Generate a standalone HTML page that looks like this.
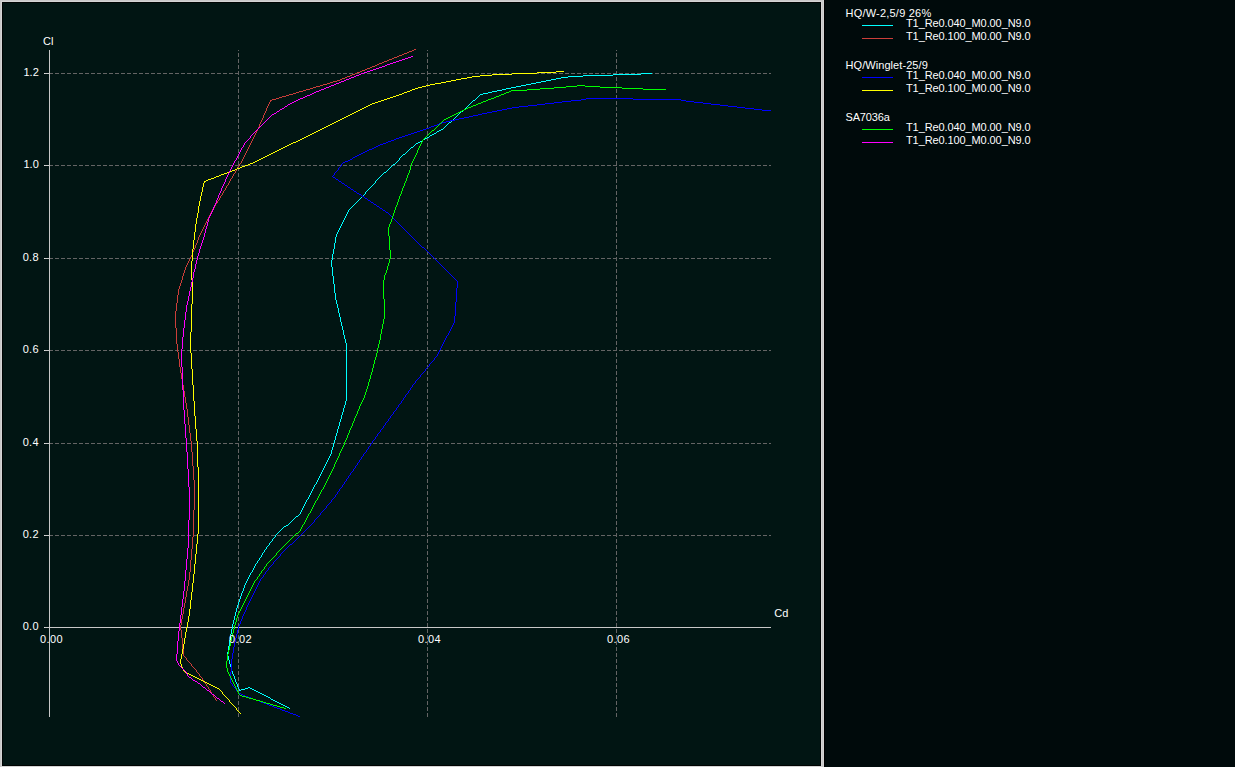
<!DOCTYPE html>
<html><head><meta charset="utf-8"><title>Polars</title>
<style>
html,body{margin:0;padding:0;background:#000a0b;overflow:hidden}
body{width:1235px;height:767px;position:relative;font-family:"Liberation Sans", sans-serif;font-size:11px;color:#fff}
#plot{position:absolute;left:0;top:0;width:823px;height:768px;background:#011513;box-sizing:border-box}
.b{position:absolute}
.t{position:absolute;white-space:nowrap;line-height:14px;height:14px;font-size:11px}
</style></head><body>
<div id="plot"></div>
<div class="b" style="left:0;top:0;width:823px;height:1px;background:#c8c8c8"></div>
<div class="b" style="left:0;top:0;width:1px;height:767px;background:#c8c8c8"></div>
<div class="b" style="left:1px;top:1px;width:821px;height:1px;background:#d4d4d4"></div>
<div class="b" style="left:1px;top:1px;width:1px;height:766px;background:#d4d4d4"></div>
<div class="b" style="left:2px;top:2px;width:819px;height:1px;background:#000403"></div>
<div class="b" style="left:2px;top:2px;width:1px;height:764px;background:#000403"></div>
<div class="b" style="left:2px;top:765px;width:819px;height:1px;background:#000403"></div>
<div class="b" style="left:820px;top:2px;width:1px;height:764px;background:#000403"></div>
<div class="b" style="left:1px;top:766px;width:821px;height:1px;background:#d4d4d4"></div>
<div class="b" style="left:821px;top:1px;width:1px;height:766px;background:#d4d4d4"></div>
<div class="b" style="left:822px;top:0;width:1px;height:767px;background:#c8c8c8"></div>
<div class="b" style="left:823px;top:0;width:1px;height:767px;background:#d4d4d4"></div>
<div class="b" style="left:824px;top:0;width:1px;height:767px;background:#000"></div>
<svg width="1235" height="767" viewBox="0 0 1235 767" style="position:absolute;left:0;top:0" shape-rendering="crispEdges">
<line x1="238.5" y1="717" x2="238.5" y2="50" stroke="#646464" stroke-width="1" stroke-dasharray="4 2"/>
<line x1="427.5" y1="717" x2="427.5" y2="50" stroke="#646464" stroke-width="1" stroke-dasharray="4 2"/>
<line x1="616.5" y1="717" x2="616.5" y2="50" stroke="#646464" stroke-width="1" stroke-dasharray="4 2"/>
<line x1="49" y1="73.5" x2="771" y2="73.5" stroke="#646464" stroke-width="1" stroke-dasharray="4 2"/>
<line x1="49" y1="165.5" x2="771" y2="165.5" stroke="#646464" stroke-width="1" stroke-dasharray="4 2"/>
<line x1="49" y1="258.5" x2="771" y2="258.5" stroke="#646464" stroke-width="1" stroke-dasharray="4 2"/>
<line x1="49" y1="350.5" x2="771" y2="350.5" stroke="#646464" stroke-width="1" stroke-dasharray="4 2"/>
<line x1="49" y1="443.5" x2="771" y2="443.5" stroke="#646464" stroke-width="1" stroke-dasharray="4 2"/>
<line x1="49" y1="535.5" x2="771" y2="535.5" stroke="#646464" stroke-width="1" stroke-dasharray="4 2"/>
<line x1="49.5" y1="50" x2="49.5" y2="717" stroke="#c8c8c8" stroke-width="1"/>
<line x1="49" y1="627.5" x2="771" y2="627.5" stroke="#c8c8c8" stroke-width="1"/>
<line x1="44" y1="73.5" x2="49" y2="73.5" stroke="#c8c8c8" stroke-width="1"/>
<line x1="44" y1="73.5" x2="45" y2="73.5" stroke="#e2e2e2" stroke-width="1"/>
<line x1="44" y1="165.5" x2="49" y2="165.5" stroke="#c8c8c8" stroke-width="1"/>
<line x1="44" y1="165.5" x2="45" y2="165.5" stroke="#e2e2e2" stroke-width="1"/>
<line x1="44" y1="258.5" x2="49" y2="258.5" stroke="#c8c8c8" stroke-width="1"/>
<line x1="44" y1="258.5" x2="45" y2="258.5" stroke="#e2e2e2" stroke-width="1"/>
<line x1="44" y1="350.5" x2="49" y2="350.5" stroke="#c8c8c8" stroke-width="1"/>
<line x1="44" y1="350.5" x2="45" y2="350.5" stroke="#e2e2e2" stroke-width="1"/>
<line x1="44" y1="443.5" x2="49" y2="443.5" stroke="#c8c8c8" stroke-width="1"/>
<line x1="44" y1="443.5" x2="45" y2="443.5" stroke="#e2e2e2" stroke-width="1"/>
<line x1="44" y1="535.5" x2="49" y2="535.5" stroke="#c8c8c8" stroke-width="1"/>
<line x1="44" y1="535.5" x2="45" y2="535.5" stroke="#e2e2e2" stroke-width="1"/>
<line x1="44" y1="627.5" x2="49" y2="627.5" stroke="#c8c8c8" stroke-width="1"/>
<line x1="44" y1="627.5" x2="45" y2="627.5" stroke="#e2e2e2" stroke-width="1"/>
<path fill="none" stroke="#00ffff" stroke-width="1" d="M641 73.5h11M613 74.5h28M583 75.5h30M568 76.5h15M561 77.5h7M556 78.5h5M551 79.5h5M546 80.5h5M541 81.5h5M536 82.5h5M531 83.5h5M526 84.5h5M521 85.5h5M516 86.5h5M511 87.5h5M506 88.5h5M502 89.5h4M497 90.5h5M492 91.5h5M488 92.5h4M483 93.5h5M480 94.5h3M473 100.5h2M461 111.5h2M449 122.5h2M441 129.5h2M439 130.5h2M437 131.5h2M434 133.5h2M432 134.5h2M430 135.5h2M427 137.5h2M425 138.5h2M423 139.5h2M420 141.5h2M418 142.5h2M416 143.5h2M411 147.5h2M403 154.5h2M393 164.5h2M384 172.5h2M296 516.5h2M286 525.5h2M284 526.5h2M248 687.5h2M245 688.5h3M250 688.5h2M241 689.5h4M252 689.5h2M239 690.5h2M254 690.5h2M256 691.5h2M258 692.5h2M260 693.5h2M262 694.5h2M264 695.5h2M266 696.5h2M268 697.5h2M271 699.5h2M273 700.5h2M275 701.5h2M277 702.5h2M279 703.5h2M281 704.5h2M283 705.5h2M285 706.5h2M287 707.5h2M227.5 652v4M228.5 646v6M228.5 656v4M229.5 640v6M229.5 660v4M230.5 634v6M230.5 664v3M231.5 629v5M231.5 667v4M232.5 624v5M232.5 671v3M233.5 620v4M233.5 674v2M234.5 616v4M234.5 676v3M235.5 612v4M235.5 679v3M236.5 608v4M236.5 682v2M237.5 605v3M237.5 684v3M238.5 602v3M238.5 687v2M239.5 599v3M239.5 689v1M240.5 596v3M241.5 593v3M242.5 591v2M243.5 588v3M244.5 585v3M245.5 583v2M246.5 581v2M247.5 579v2M248.5 577v2M249.5 575v2M250.5 573v2M251.5 572v1M252.5 570v2M253.5 568v2M254.5 566v2M255.5 564v2M256.5 563v1M257.5 561v2M258.5 560v1M259.5 558v2M260.5 557v1M261.5 555v2M262.5 553v2M263.5 552v1M264.5 550v2M265.5 549v1M266.5 547v2M267.5 546v1M268.5 545v1M269.5 543v2M270.5 542v1M270.5 698v1M271.5 541v1M272.5 539v2M273.5 538v1M274.5 537v1M275.5 535v2M276.5 534v1M277.5 533v1M278.5 532v1M279.5 531v1M280.5 530v1M281.5 529v1M282.5 528v1M283.5 527v1M288.5 524v1M289.5 523v1M289.5 708v1M290.5 522v1M291.5 521v1M292.5 520v1M293.5 519v1M294.5 518v1M295.5 517v1M298.5 515v1M299.5 514v1M300.5 512v2M301.5 510v2M302.5 508v2M303.5 506v2M304.5 504v2M305.5 502v2M306.5 500v2M307.5 499v1M308.5 497v2M309.5 495v2M310.5 493v2M311.5 491v2M312.5 489v2M313.5 487v2M314.5 485v2M315.5 484v1M316.5 482v2M317.5 480v2M318.5 478v2M319.5 476v2M320.5 474v2M321.5 472v2M322.5 470v2M323.5 468v2M324.5 466v2M325.5 464v2M326.5 462v2M327.5 460v2M328.5 458v2M329.5 456v2M330.5 454v2M331.5 260v7M331.5 450v4M332.5 254v6M332.5 267v9M332.5 447v3M333.5 249v5M333.5 276v8M333.5 443v4M334.5 243v6M334.5 284v9M334.5 440v3M335.5 237v6M335.5 293v7M335.5 436v4M336.5 234v3M336.5 300v4M336.5 433v3M337.5 232v2M337.5 304v4M337.5 429v4M338.5 230v2M338.5 308v5M338.5 426v3M339.5 228v2M339.5 313v4M339.5 422v4M340.5 226v2M340.5 317v5M340.5 419v3M341.5 224v2M341.5 322v4M341.5 415v4M342.5 222v2M342.5 326v4M342.5 412v3M343.5 220v2M343.5 330v5M343.5 408v4M344.5 218v2M344.5 335v4M344.5 405v3M345.5 216v2M345.5 339v4M345.5 401v4M346.5 214v2M346.5 343v58M347.5 212v2M348.5 210v2M349.5 209v1M350.5 208v1M351.5 207v1M352.5 206v1M353.5 205v1M354.5 204v1M355.5 203v1M356.5 202v1M357.5 201v1M358.5 200v1M359.5 199v1M360.5 198v1M361.5 197v1M362.5 196v1M363.5 195v1M364.5 194v1M365.5 192v2M366.5 191v1M367.5 190v1M368.5 189v1M369.5 188v1M370.5 187v1M371.5 186v1M372.5 185v1M373.5 184v1M374.5 183v1M375.5 181v2M376.5 180v1M377.5 179v1M378.5 178v1M379.5 177v1M380.5 176v1M381.5 175v1M382.5 174v1M383.5 173v1M386.5 171v1M387.5 170v1M388.5 169v1M389.5 168v1M390.5 167v1M391.5 166v1M392.5 165v1M395.5 163v1M396.5 162v1M397.5 161v1M398.5 160v1M399.5 158v2M400.5 157v1M401.5 156v1M402.5 155v1M405.5 153v1M406.5 152v1M407.5 151v1M408.5 150v1M409.5 149v1M410.5 148v1M413.5 146v1M414.5 145v1M415.5 144v1M422.5 140v1M429.5 136v1M436.5 132v1M443.5 128v1M444.5 127v1M445.5 126v1M446.5 125v1M447.5 124v1M448.5 123v1M451.5 121v1M452.5 120v1M453.5 119v1M454.5 118v1M455.5 117v1M456.5 116v1M457.5 115v1M458.5 114v1M459.5 113v1M460.5 112v1M463.5 110v1M464.5 109v1M465.5 108v1M466.5 107v1M467.5 106v1M468.5 105v1M469.5 104v1M470.5 103v1M471.5 102v1M472.5 101v1M475.5 99v1M476.5 98v1M477.5 97v1M478.5 96v1M479.5 95v1"/>
<path fill="none" stroke="#cb3e3a" stroke-width="1" d="M414 49.5h2M412 50.5h2M409 51.5h3M407 52.5h2M404 53.5h3M402 54.5h2M399 55.5h3M397 56.5h2M394 57.5h3M392 58.5h2M389 59.5h3M387 60.5h2M384 61.5h3M382 62.5h2M379 63.5h3M377 64.5h2M375 65.5h2M372 66.5h3M370 67.5h2M367 68.5h3M365 69.5h2M362 70.5h3M360 71.5h2M357 72.5h3M355 73.5h2M352 74.5h3M350 75.5h2M347 76.5h3M345 77.5h2M342 78.5h3M340 79.5h2M337 80.5h3M333 81.5h4M330 82.5h3M327 83.5h3M323 84.5h4M320 85.5h3M316 86.5h4M313 87.5h3M310 88.5h3M306 89.5h4M303 90.5h3M299 91.5h4M296 92.5h3M293 93.5h3M289 94.5h4M286 95.5h3M282 96.5h4M279 97.5h3M276 98.5h3M272 99.5h4M270 100.5h2M175.5 311v17M176.5 303v8M176.5 328v16M177.5 295v8M177.5 344v8M178.5 289v6M178.5 352v7M179.5 286v3M179.5 359v8M180.5 283v3M180.5 367v6M180.5 625v5M181.5 280v3M181.5 373v6M181.5 619v6M181.5 630v8M182.5 276v4M182.5 379v6M182.5 614v5M182.5 638v11M183.5 273v3M183.5 385v6M183.5 608v6M183.5 649v7M184.5 270v3M184.5 391v6M184.5 603v5M184.5 656v1M185.5 267v3M185.5 397v6M185.5 597v6M185.5 657v1M186.5 265v2M186.5 403v6M186.5 591v6M186.5 658v2M187.5 263v2M187.5 409v8M187.5 586v5M187.5 660v1M188.5 261v2M188.5 417v8M188.5 580v6M188.5 661v1M189.5 259v2M189.5 425v8M189.5 572v8M189.5 662v1M190.5 257v2M190.5 433v8M190.5 560v12M190.5 663v1M191.5 255v2M191.5 441v11M191.5 549v11M191.5 664v2M192.5 252v3M192.5 452v14M192.5 537v12M192.5 666v1M193.5 250v2M193.5 466v14M193.5 510v27M193.5 667v1M194.5 248v2M194.5 480v30M194.5 668v1M195.5 245v3M195.5 669v1M196.5 243v2M196.5 670v2M197.5 240v3M197.5 672v1M198.5 237v3M198.5 673v1M199.5 235v2M199.5 674v2M200.5 233v2M200.5 676v1M201.5 231v2M201.5 677v1M202.5 229v2M202.5 678v2M203.5 227v2M203.5 680v1M204.5 225v2M204.5 681v2M205.5 223v2M205.5 683v1M206.5 221v2M206.5 684v2M207.5 219v2M207.5 686v1M208.5 217v2M208.5 687v2M209.5 215v2M209.5 689v1M210.5 213v2M210.5 690v2M211.5 211v2M211.5 692v2M212.5 209v2M212.5 694v1M213.5 208v1M213.5 695v2M214.5 206v2M214.5 697v1M215.5 204v2M215.5 698v2M216.5 203v1M216.5 700v1M217.5 201v2M218.5 200v1M219.5 198v2M220.5 196v2M221.5 195v1M222.5 193v2M223.5 191v2M224.5 190v1M225.5 188v2M226.5 186v2M227.5 185v1M228.5 183v2M229.5 181v2M230.5 179v2M231.5 178v1M232.5 176v2M233.5 174v2M234.5 173v1M235.5 171v2M236.5 169v2M237.5 167v2M238.5 166v1M239.5 164v2M240.5 163v1M241.5 161v2M242.5 159v2M243.5 157v2M244.5 155v2M245.5 153v2M246.5 151v2M247.5 149v2M248.5 147v2M249.5 145v2M250.5 143v2M251.5 141v2M252.5 139v2M253.5 137v2M254.5 135v2M255.5 133v2M256.5 131v2M257.5 129v2M258.5 127v2M259.5 124v3M260.5 122v2M261.5 120v2M262.5 118v2M263.5 115v3M264.5 113v2M265.5 111v2M266.5 108v3M267.5 106v2M268.5 104v2M269.5 102v2M270.5 101v1"/>
<path fill="none" stroke="#0000ff" stroke-width="1" d="M586 98.5h47M581 99.5h5M633 99.5h48M571 100.5h10M681 100.5h5M562 101.5h9M686 101.5h8M554 102.5h8M694 102.5h9M545 103.5h9M703 103.5h8M537 104.5h8M711 104.5h9M528 105.5h9M720 105.5h8M519 106.5h9M728 106.5h9M512 107.5h7M737 107.5h8M507 108.5h5M745 108.5h9M502 109.5h5M754 109.5h8M497 110.5h5M762 110.5h9M492 111.5h5M487 112.5h5M482 113.5h5M478 114.5h4M473 115.5h5M469 116.5h4M464 117.5h5M459 118.5h5M455 119.5h4M450 120.5h5M446 121.5h4M442 122.5h4M439 123.5h3M437 124.5h2M434 125.5h3M431 126.5h3M429 127.5h2M426 128.5h3M423 129.5h3M420 130.5h3M417 131.5h3M414 132.5h3M411 133.5h3M408 134.5h3M405 135.5h3M402 136.5h3M399 137.5h3M396 138.5h3M394 139.5h2M391 140.5h3M388 141.5h3M386 142.5h2M383 143.5h3M380 144.5h3M378 145.5h2M376 146.5h2M374 147.5h2M372 148.5h2M369 149.5h3M367 150.5h2M365 151.5h2M363 152.5h2M361 153.5h2M359 154.5h2M357 155.5h2M355 156.5h2M353 157.5h2M350 159.5h2M348 160.5h2M345 161.5h3M343 162.5h2M333 177.5h2M336 179.5h2M339 181.5h2M342 183.5h2M345 185.5h2M348 187.5h2M351 189.5h2M354 191.5h2M357 193.5h2M359 194.5h2M362 196.5h2M365 198.5h2M368 200.5h2M371 202.5h2M374 204.5h2M377 206.5h2M380 208.5h2M383 210.5h2M386 212.5h2M422 247.5h2M290 544.5h2M239 693.5h2M241 694.5h2M243 695.5h2M245 696.5h3M248 697.5h3M251 698.5h2M253 699.5h3M256 700.5h3M259 701.5h2M261 702.5h3M264 703.5h3M267 704.5h2M269 705.5h3M272 706.5h2M274 707.5h3M277 708.5h3M280 709.5h2M282 710.5h3M285 711.5h3M288 712.5h2M290 713.5h3M293 714.5h3M296 715.5h2M298 716.5h2M230.5 672v11M231.5 659v13M231.5 683v1M232.5 653v6M232.5 684v2M233.5 647v6M233.5 686v1M234.5 642v5M234.5 687v1M235.5 638v4M235.5 688v1M236.5 634v4M236.5 689v2M237.5 630v4M237.5 691v1M238.5 626v4M238.5 692v1M239.5 624v2M240.5 621v3M241.5 619v2M242.5 616v3M243.5 614v2M244.5 612v2M245.5 610v2M246.5 607v3M247.5 605v2M248.5 603v2M249.5 601v2M250.5 599v2M251.5 597v2M252.5 595v2M253.5 593v2M254.5 591v2M255.5 589v2M256.5 587v2M257.5 585v2M258.5 583v2M259.5 581v2M260.5 579v2M261.5 578v1M262.5 577v1M263.5 575v2M264.5 574v1M265.5 572v2M266.5 571v1M267.5 570v1M268.5 568v2M269.5 567v1M270.5 566v1M271.5 565v1M272.5 564v1M273.5 562v2M274.5 561v1M275.5 560v1M276.5 559v1M277.5 558v1M278.5 557v1M279.5 556v1M280.5 554v2M281.5 553v1M282.5 552v1M283.5 551v1M284.5 550v1M285.5 549v1M286.5 548v1M287.5 547v1M288.5 546v1M289.5 545v1M292.5 543v1M293.5 542v1M294.5 541v1M295.5 540v1M296.5 539v1M297.5 538v1M298.5 537v1M299.5 536v1M300.5 535v1M301.5 534v1M302.5 533v1M303.5 532v1M304.5 531v1M305.5 530v1M306.5 529v1M307.5 528v1M308.5 527v1M309.5 526v1M310.5 525v1M311.5 524v1M312.5 523v1M313.5 522v1M314.5 520v2M315.5 519v1M316.5 518v1M317.5 517v1M318.5 516v1M319.5 515v1M320.5 513v2M321.5 512v1M322.5 511v1M323.5 510v1M324.5 509v1M325.5 508v1M326.5 506v2M327.5 505v1M328.5 504v1M329.5 503v1M330.5 502v1M331.5 500v2M332.5 176v1M332.5 499v1M333.5 175v1M333.5 498v1M334.5 173v2M334.5 497v1M335.5 172v1M335.5 178v1M335.5 495v2M336.5 171v1M336.5 494v1M337.5 170v1M337.5 492v2M338.5 168v2M338.5 180v1M338.5 491v1M339.5 167v1M339.5 489v2M340.5 166v1M340.5 488v1M341.5 164v2M341.5 182v1M341.5 487v1M342.5 163v1M342.5 485v2M343.5 484v1M344.5 184v1M344.5 482v2M345.5 481v1M346.5 479v2M347.5 186v1M347.5 478v1M348.5 476v2M349.5 475v1M350.5 188v1M350.5 473v2M351.5 472v1M352.5 158v1M352.5 471v1M353.5 190v1M353.5 469v2M354.5 468v1M355.5 466v2M356.5 192v1M356.5 465v1M357.5 463v2M358.5 462v1M359.5 460v2M360.5 459v1M361.5 195v1M361.5 457v2M362.5 456v1M363.5 454v2M364.5 197v1M364.5 453v1M365.5 452v1M366.5 450v2M367.5 199v1M367.5 449v1M368.5 447v2M369.5 446v1M370.5 201v1M370.5 444v2M371.5 443v1M372.5 441v2M373.5 203v1M373.5 440v1M374.5 439v1M375.5 437v2M376.5 205v1M376.5 436v1M377.5 434v2M378.5 433v1M379.5 207v1M379.5 432v1M380.5 430v2M381.5 429v1M382.5 209v1M382.5 428v1M383.5 426v2M384.5 425v1M385.5 211v1M385.5 423v2M386.5 422v1M387.5 421v1M388.5 213v1M388.5 419v2M389.5 214v1M389.5 418v1M390.5 215v1M390.5 416v2M391.5 216v1M391.5 415v1M392.5 217v1M392.5 414v1M393.5 218v1M393.5 412v2M394.5 219v1M394.5 411v1M395.5 220v1M395.5 410v1M396.5 221v1M396.5 408v2M397.5 222v1M397.5 407v1M398.5 223v1M398.5 405v2M399.5 224v1M399.5 404v1M400.5 225v1M400.5 403v1M401.5 226v1M401.5 401v2M402.5 227v1M402.5 400v1M403.5 228v1M403.5 398v2M404.5 229v1M404.5 397v1M405.5 230v1M405.5 395v2M406.5 231v1M406.5 394v1M407.5 232v1M407.5 393v1M408.5 233v1M408.5 391v2M409.5 234v1M409.5 390v1M410.5 235v1M410.5 388v2M411.5 236v1M411.5 387v1M412.5 237v1M412.5 385v2M413.5 238v1M413.5 384v1M414.5 239v1M414.5 383v1M415.5 240v1M415.5 381v2M416.5 241v1M416.5 380v1M417.5 242v1M417.5 379v1M418.5 243v1M418.5 378v1M419.5 244v1M419.5 377v1M420.5 245v1M420.5 375v2M421.5 246v1M421.5 374v1M422.5 373v1M423.5 372v1M424.5 248v1M424.5 371v1M425.5 249v1M425.5 369v2M426.5 250v1M426.5 368v1M427.5 251v1M427.5 367v1M428.5 252v1M428.5 366v1M429.5 253v1M429.5 364v2M430.5 254v1M430.5 363v1M431.5 255v1M431.5 362v1M432.5 256v1M432.5 361v1M433.5 257v1M433.5 360v1M434.5 258v1M434.5 358v2M435.5 259v1M435.5 357v1M436.5 260v1M436.5 356v1M437.5 261v1M437.5 354v2M438.5 262v1M438.5 352v2M439.5 263v1M439.5 350v2M440.5 264v1M440.5 348v2M441.5 265v1M441.5 346v2M442.5 266v1M442.5 344v2M443.5 267v1M443.5 342v2M444.5 268v1M444.5 340v2M445.5 269v1M445.5 338v2M446.5 270v1M446.5 336v2M447.5 271v1M447.5 335v1M448.5 272v1M448.5 333v2M449.5 273v1M449.5 331v2M450.5 274v1M450.5 329v2M451.5 275v1M451.5 327v2M452.5 276v1M452.5 325v2M453.5 277v1M453.5 323v2M454.5 278v1M454.5 316v7M455.5 279v1M455.5 302v14M456.5 280v1M456.5 288v14M457.5 281v7"/>
<path fill="none" stroke="#ffff00" stroke-width="1" d="M556 71.5h8M537 72.5h19M512 73.5h25M492 74.5h20M480 75.5h12M472 76.5h8M467 77.5h5M461 78.5h6M456 79.5h5M451 80.5h5M446 81.5h5M441 82.5h5M435 83.5h6M430 84.5h5M426 85.5h4M422 86.5h4M418 87.5h4M415 88.5h3M412 89.5h3M410 90.5h2M407 91.5h3M404 92.5h3M402 93.5h2M399 94.5h3M396 95.5h3M393 96.5h3M390 97.5h3M387 98.5h3M384 99.5h3M381 100.5h3M378 101.5h3M375 102.5h3M372 103.5h3M370 104.5h2M368 105.5h2M366 106.5h2M364 107.5h2M362 108.5h2M360 109.5h2M358 110.5h2M356 111.5h2M354 112.5h2M352 113.5h2M350 114.5h2M348 115.5h2M346 116.5h2M344 117.5h2M342 118.5h2M340 119.5h2M338 120.5h2M336 121.5h2M334 122.5h2M332 123.5h2M330 124.5h2M328 125.5h2M326 126.5h2M324 127.5h2M322 128.5h2M320 129.5h2M318 130.5h2M316 131.5h2M314 132.5h2M312 133.5h2M310 134.5h2M308 135.5h2M306 136.5h2M304 137.5h2M302 138.5h2M300 139.5h2M298 140.5h2M296 141.5h2M293 142.5h3M291 143.5h2M289 144.5h2M287 145.5h2M285 146.5h2M283 147.5h2M281 148.5h2M279 149.5h2M277 150.5h2M275 151.5h2M273 152.5h2M271 153.5h2M269 154.5h2M267 155.5h2M265 156.5h2M263 157.5h2M261 158.5h2M259 159.5h2M257 160.5h2M255 161.5h2M253 162.5h2M250 163.5h3M248 164.5h2M245 165.5h3M242 166.5h3M240 167.5h2M237 168.5h3M235 169.5h2M232 170.5h3M229 171.5h3M227 172.5h2M224 173.5h3M221 174.5h3M219 175.5h2M216 176.5h3M214 177.5h2M211 178.5h3M208 179.5h3M206 180.5h2M204 181.5h2M185 672.5h2M187 673.5h2M189 674.5h2M191 675.5h2M193 676.5h2M195 677.5h2M197 678.5h2M199 679.5h2M201 680.5h2M203 681.5h2M205 682.5h2M207 683.5h2M209 684.5h2M211 685.5h2M213 686.5h2M215 687.5h2M217 688.5h2M180.5 659v5M181.5 654v5M181.5 664v3M182.5 649v5M182.5 667v2M183.5 644v5M183.5 669v2M184.5 638v6M184.5 671v1M185.5 632v6M186.5 627v5M187.5 622v5M188.5 616v6M189.5 609v7M190.5 332v21M190.5 600v9M191.5 261v19M191.5 304v28M191.5 353v16M191.5 592v8M192.5 249v12M192.5 280v24M192.5 369v16M192.5 583v9M193.5 240v9M193.5 385v16M193.5 574v9M194.5 232v8M194.5 401v15M194.5 564v10M195.5 224v8M195.5 416v13M195.5 554v10M196.5 218v6M196.5 429v12M196.5 544v10M197.5 213v5M197.5 441v26M197.5 534v10M198.5 206v7M198.5 467v67M199.5 201v5M200.5 196v5M201.5 192v4M202.5 187v5M203.5 183v4M204.5 182v1M219.5 689v1M220.5 690v1M221.5 691v1M222.5 692v2M223.5 694v1M224.5 695v1M225.5 696v1M226.5 697v1M227.5 698v1M228.5 699v1M229.5 700v2M230.5 702v1M231.5 703v1M232.5 704v1M233.5 705v1M234.5 706v1M235.5 707v1M236.5 708v2M237.5 710v1M238.5 711v1M239.5 712v1M240.5 713v1"/>
<path fill="none" stroke="#00ff00" stroke-width="1" d="M577 85.5h8M566 86.5h11M585 86.5h15M554 87.5h12M600 87.5h22M540 88.5h14M622 88.5h21M527 89.5h13M643 89.5h23M511 90.5h16M509 91.5h2M506 92.5h3M504 93.5h2M501 94.5h3M499 95.5h2M496 96.5h3M494 97.5h2M491 98.5h3M488 99.5h3M486 100.5h2M483 101.5h3M481 102.5h2M478 103.5h3M476 104.5h2M473 105.5h3M471 106.5h2M468 107.5h3M466 108.5h2M464 109.5h2M462 110.5h2M460 111.5h2M458 112.5h2M456 113.5h2M454 114.5h2M452 115.5h2M450 116.5h2M448 117.5h2M446 118.5h2M444 119.5h2M432 130.5h2M296 533.5h2M240 695.5h2M242 696.5h4M246 697.5h3M249 698.5h4M253 699.5h3M256 700.5h4M260 701.5h3M263 702.5h3M266 703.5h4M270 704.5h3M273 705.5h4M277 706.5h3M280 707.5h4M284 708.5h2M226.5 661v7M227.5 654v7M227.5 668v4M228.5 650v4M228.5 672v2M229.5 646v4M229.5 674v2M230.5 641v5M230.5 676v2M231.5 637v4M231.5 678v2M232.5 633v4M232.5 680v2M233.5 629v4M233.5 682v2M234.5 625v4M234.5 684v2M235.5 622v3M235.5 686v2M236.5 618v4M236.5 688v2M237.5 615v3M237.5 690v2M238.5 613v2M238.5 692v2M239.5 611v2M239.5 694v1M240.5 609v2M241.5 607v2M242.5 605v2M243.5 603v2M244.5 601v2M245.5 599v2M246.5 597v2M247.5 595v2M248.5 593v2M249.5 591v2M250.5 589v2M251.5 587v2M252.5 585v2M253.5 583v2M254.5 581v2M255.5 580v1M256.5 579v1M257.5 577v2M258.5 576v1M259.5 574v2M260.5 573v1M261.5 571v2M262.5 570v1M263.5 569v1M264.5 567v2M265.5 566v1M266.5 564v2M267.5 563v1M268.5 562v1M269.5 561v1M270.5 560v1M271.5 559v1M272.5 558v1M273.5 557v1M274.5 556v1M275.5 555v1M276.5 553v2M277.5 552v1M278.5 551v1M279.5 550v1M280.5 549v1M281.5 548v1M282.5 547v1M283.5 546v1M284.5 545v1M285.5 544v1M286.5 543v1M287.5 542v1M288.5 541v1M289.5 540v1M290.5 539v1M291.5 538v1M292.5 537v1M293.5 536v1M294.5 535v1M295.5 534v1M298.5 532v1M299.5 531v1M300.5 529v2M301.5 527v2M302.5 525v2M303.5 524v1M304.5 522v2M305.5 520v2M306.5 518v2M307.5 516v2M308.5 514v2M309.5 513v1M310.5 511v2M311.5 509v2M312.5 507v2M313.5 505v2M314.5 503v2M315.5 501v2M316.5 500v1M317.5 498v2M318.5 496v2M319.5 494v2M320.5 492v2M321.5 490v2M322.5 489v1M323.5 487v2M324.5 485v2M325.5 483v2M326.5 481v2M327.5 479v2M328.5 477v2M329.5 475v2M330.5 473v2M331.5 471v2M332.5 469v2M333.5 467v2M334.5 464v3M335.5 462v2M336.5 460v2M337.5 458v2M338.5 456v2M339.5 453v3M340.5 451v2M341.5 449v2M342.5 447v2M343.5 445v2M344.5 442v3M345.5 440v2M346.5 438v2M347.5 435v3M348.5 433v2M349.5 430v3M350.5 428v2M351.5 426v2M352.5 423v3M353.5 421v2M354.5 418v3M355.5 416v2M356.5 414v2M357.5 411v3M358.5 409v2M359.5 406v3M360.5 404v2M361.5 402v2M362.5 400v2M363.5 398v2M364.5 395v3M365.5 392v3M366.5 389v3M367.5 386v3M368.5 382v4M369.5 379v3M370.5 375v4M371.5 372v3M372.5 368v4M373.5 364v4M374.5 360v4M375.5 357v3M376.5 353v4M377.5 348v5M378.5 344v4M379.5 340v4M380.5 334v6M381.5 329v5M382.5 324v5M383.5 280v19M383.5 319v5M384.5 275v5M384.5 299v20M385.5 273v2M386.5 270v3M387.5 266v4M388.5 227v9M388.5 263v3M389.5 224v3M389.5 236v14M389.5 259v4M390.5 222v2M390.5 250v9M391.5 219v3M392.5 216v3M393.5 213v3M394.5 210v3M395.5 207v3M396.5 205v2M397.5 202v3M398.5 199v3M399.5 196v3M400.5 194v2M401.5 191v3M402.5 188v3M403.5 186v2M404.5 183v3M405.5 181v2M406.5 178v3M407.5 175v3M408.5 173v2M409.5 170v3M410.5 166v4M411.5 163v3M412.5 161v2M413.5 159v2M414.5 157v2M415.5 155v2M416.5 153v2M417.5 150v3M418.5 148v2M419.5 146v2M420.5 144v2M421.5 142v2M422.5 140v2M423.5 139v1M424.5 138v1M425.5 137v1M426.5 136v1M427.5 135v1M428.5 134v1M429.5 133v1M430.5 132v1M431.5 131v1M434.5 129v1M435.5 128v1M436.5 127v1M437.5 126v1M438.5 125v1M439.5 124v1M440.5 123v1M441.5 122v1M442.5 121v1M443.5 120v1"/>
<path fill="none" stroke="#ff00ff" stroke-width="1" d="M411 56.5h2M408 57.5h3M405 58.5h3M402 59.5h3M399 60.5h3M396 61.5h3M393 62.5h3M390 63.5h3M387 64.5h3M385 65.5h2M382 66.5h3M379 67.5h3M376 68.5h3M373 69.5h3M370 70.5h3M367 71.5h3M364 72.5h3M361 73.5h3M359 74.5h2M356 75.5h3M354 76.5h2M351 77.5h3M349 78.5h2M346 79.5h3M344 80.5h2M341 81.5h3M339 82.5h2M336 83.5h3M334 84.5h2M331 85.5h3M329 86.5h2M326 87.5h3M324 88.5h2M321 89.5h3M319 90.5h2M316 91.5h3M314 92.5h2M312 93.5h2M310 94.5h2M307 95.5h3M305 96.5h2M303 97.5h2M300 98.5h3M298 99.5h2M296 100.5h2M294 101.5h2M292 102.5h2M290 103.5h2M288 104.5h2M285 106.5h2M282 108.5h2M280 109.5h2M277 111.5h2M274 113.5h2M272 114.5h2M189 677.5h2M193 680.5h2M195 681.5h2M198 683.5h2M203 687.5h2M207 690.5h2M212 694.5h2M217 698.5h2M221 701.5h2M176.5 654v7M177.5 641v13M177.5 661v2M178.5 631v10M178.5 663v2M179.5 623v8M179.5 665v1M180.5 615v8M180.5 666v1M181.5 349v18M181.5 607v8M181.5 667v1M182.5 337v12M182.5 367v23M182.5 599v8M182.5 668v1M183.5 328v9M183.5 390v20M183.5 591v8M183.5 669v1M184.5 320v8M184.5 410v14M184.5 581v10M184.5 670v1M185.5 312v8M185.5 424v14M185.5 570v11M185.5 671v1M186.5 305v7M186.5 438v14M186.5 559v11M186.5 672v2M187.5 301v4M187.5 452v17M187.5 548v11M187.5 674v2M188.5 296v5M188.5 469v18M188.5 520v28M188.5 676v1M189.5 291v5M189.5 487v33M190.5 287v4M191.5 282v5M191.5 678v1M192.5 278v4M192.5 679v1M193.5 272v6M194.5 269v3M195.5 264v5M196.5 260v4M197.5 256v4M197.5 682v1M198.5 253v3M199.5 249v4M200.5 246v3M200.5 684v1M201.5 243v3M201.5 685v1M202.5 240v3M202.5 686v1M203.5 237v3M204.5 233v4M205.5 229v4M205.5 688v1M206.5 226v3M206.5 689v1M207.5 222v4M208.5 218v4M209.5 216v2M209.5 691v1M210.5 214v2M210.5 692v1M211.5 212v2M211.5 693v1M212.5 210v2M213.5 207v3M214.5 205v2M214.5 695v1M215.5 203v2M215.5 696v1M216.5 200v3M216.5 697v1M217.5 198v2M218.5 195v3M219.5 193v2M219.5 699v1M220.5 191v2M220.5 700v1M221.5 188v3M222.5 186v2M223.5 184v2M223.5 702v1M224.5 182v2M224.5 703v1M225.5 179v3M226.5 177v2M227.5 175v2M228.5 173v2M229.5 171v2M230.5 169v2M231.5 167v2M232.5 165v2M233.5 163v2M234.5 161v2M235.5 160v1M236.5 158v2M237.5 156v2M238.5 154v2M239.5 152v2M240.5 150v2M241.5 148v2M242.5 147v1M243.5 145v2M244.5 143v2M245.5 142v1M246.5 141v1M247.5 140v1M248.5 139v1M249.5 138v1M250.5 136v2M251.5 135v1M252.5 134v1M253.5 133v1M254.5 132v1M255.5 131v1M256.5 130v1M257.5 129v1M258.5 128v1M259.5 127v1M260.5 126v1M261.5 125v1M262.5 124v1M263.5 123v1M264.5 122v1M265.5 121v1M266.5 120v1M267.5 119v1M268.5 118v1M269.5 117v1M270.5 116v1M271.5 115v1M276.5 112v1M279.5 110v1M284.5 107v1M287.5 105v1"/>
<line x1="862" y1="25.5" x2="893" y2="25.5" stroke="#00ffff" stroke-width="1"/>
<line x1="862" y1="38.5" x2="893" y2="38.5" stroke="#cb3e3a" stroke-width="1"/>
<line x1="862" y1="77.5" x2="893" y2="77.5" stroke="#0000ff" stroke-width="1"/>
<line x1="862" y1="90.5" x2="893" y2="90.5" stroke="#ffff00" stroke-width="1"/>
<line x1="862" y1="129.5" x2="893" y2="129.5" stroke="#00ff00" stroke-width="1"/>
<line x1="862" y1="142.5" x2="893" y2="142.5" stroke="#ff00ff" stroke-width="1"/>
</svg>
<div class="t" style="left:23.4px;top:65px;letter-spacing:0.1px">1.2</div>
<div class="t" style="left:23.4px;top:157px;letter-spacing:0.1px">1.0</div>
<div class="t" style="left:22.7px;top:250px;letter-spacing:0.3px">0.8</div>
<div class="t" style="left:22.7px;top:342px;letter-spacing:0.3px">0.6</div>
<div class="t" style="left:22.7px;top:435px;letter-spacing:0.3px">0.4</div>
<div class="t" style="left:22.7px;top:527px;letter-spacing:0.3px">0.2</div>
<div class="t" style="left:22.7px;top:619px;letter-spacing:0.3px">0.0</div>
<div class="t" style="left:40.1px;top:632px;letter-spacing:0.4px">0.00</div>
<div class="t" style="left:229.1px;top:632px;letter-spacing:0.4px">0.02</div>
<div class="t" style="left:418.1px;top:632px;letter-spacing:0.4px">0.04</div>
<div class="t" style="left:607.1px;top:632px;letter-spacing:0.4px">0.06</div>
<div class="t" style="left:43px;top:34px">Cl</div>
<div class="t" style="left:774.2px;top:606px;letter-spacing:0.1px">Cd</div>
<div class="t" style="left:845.5px;top:6px;letter-spacing:0.21px">HQ/W-2,5/9 26%</div>
<div class="t" style="left:845.5px;top:58px;letter-spacing:0.07px">HQ/Winglet-25/9</div>
<div class="t" style="left:845.5px;top:110px;letter-spacing:-0.15px">SA7036a</div>
<div class="t" style="left:906px;top:16px;letter-spacing:-0.1px">T1_Re0.040_M0.00_N9.0</div>
<div class="t" style="left:906px;top:29px;letter-spacing:-0.1px">T1_Re0.100_M0.00_N9.0</div>
<div class="t" style="left:906px;top:68px;letter-spacing:-0.1px">T1_Re0.040_M0.00_N9.0</div>
<div class="t" style="left:906px;top:81px;letter-spacing:-0.1px">T1_Re0.100_M0.00_N9.0</div>
<div class="t" style="left:906px;top:120px;letter-spacing:-0.1px">T1_Re0.040_M0.00_N9.0</div>
<div class="t" style="left:906px;top:133px;letter-spacing:-0.1px">T1_Re0.100_M0.00_N9.0</div>
</body></html>
